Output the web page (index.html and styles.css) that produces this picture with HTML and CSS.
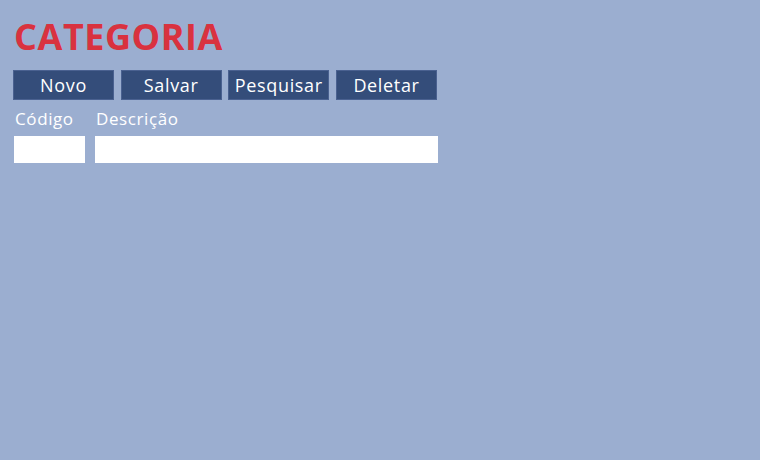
FILE: index.html
```html
<!DOCTYPE html>
<html lang="pt">
<head>
<meta charset="utf-8">
<title>Categoria</title>
<link rel="stylesheet" href="styles.css">
</head>
<body>
<div class="page">
  <h1 class="title">CATEGORIA</h1>
  <div class="toolbar">
    <button class="btn">Novo</button>
    <button class="btn">Salvar</button>
    <button class="btn">Pesquisar</button>
    <button class="btn">Deletar</button>
  </div>
  <div class="fields">
    <div class="field field-code">
      <label class="label">Código</label>
      <input class="input" type="text">
    </div>
    <div class="field field-desc">
      <label class="label">Descrição</label>
      <input class="input" type="text">
    </div>
  </div>
</div>
</body>
</html>
```
FILE: styles.css
```css
html, body {
  margin: 0;
  padding: 0;
  background: #9baed0;
  height: 100%;
}
body {
  font-family: "Open Sans", "Noto Sans", sans-serif;
}
.page {
  padding: 17px 0 0 13px;
}
.title {
  margin: 0 0 0 1px;
  font-size: 36px;
  font-weight: 700;
  line-height: 40px;
  color: #d9323f;
  letter-spacing: 0.55px;
}
.toolbar {
  display: flex;
  gap: 6.67px;
  margin-top: 13px;
}
.btn {
  width: 101px;
  height: 30px;
  margin: 0;
  padding: 0;
  background: #344d7a;
  border: 1px solid #4a6190;
  color: #ffffff;
  font-family: "Open Sans", "Noto Sans", sans-serif;
  font-size: 18px;
  letter-spacing: 0.65px;
  line-height: 26px;
  cursor: pointer;
}
.fields {
  display: flex;
  gap: 10px;
  margin-top: 9px;
  padding-left: 1px;
}
.field {
  display: flex;
  flex-direction: column;
}
.label {
  color: #ffffff;
  font-size: 17px;
  letter-spacing: 0.6px;
  line-height: 20px;
  padding-left: 1px;
  margin-bottom: 7px;
}
.input {
  box-sizing: border-box;
  height: 27px;
  border: none;
  background: #ffffff;
  margin: 0;
  padding: 0 4px;
}
.field-code .input { width: 71px; }
.field-desc .input { width: 343px; }
```
